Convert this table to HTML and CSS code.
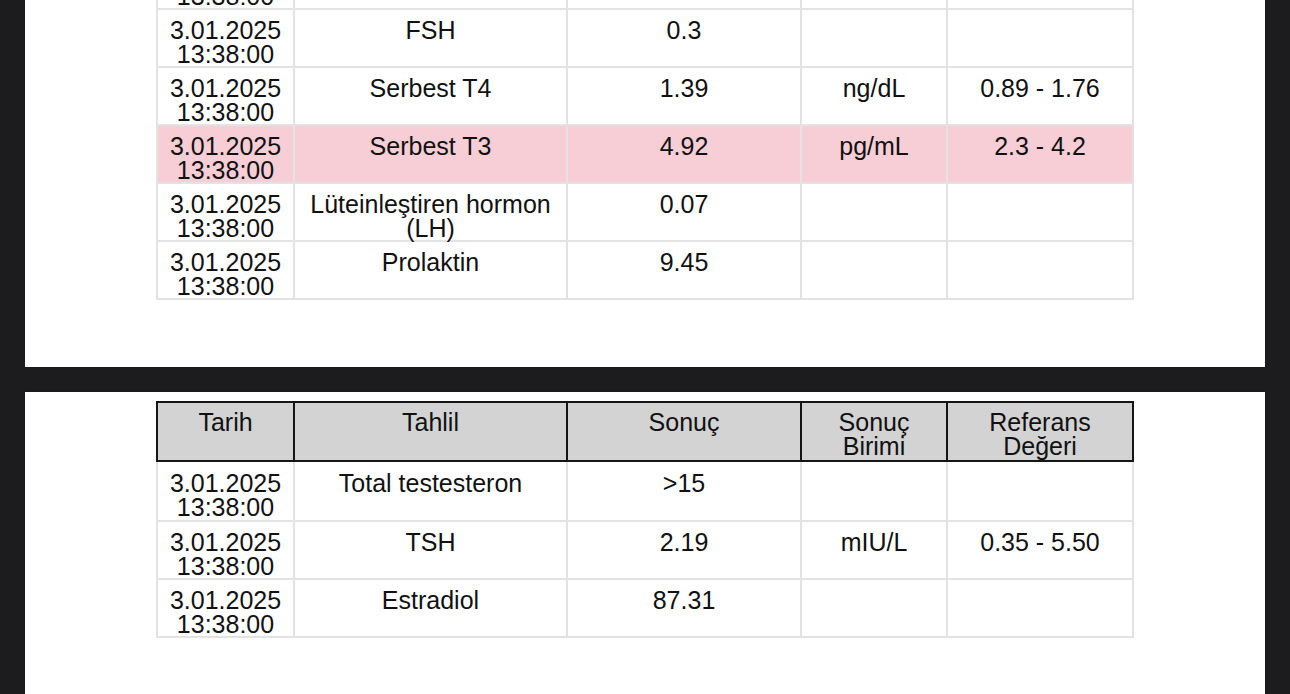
FILE: index.html
```html
<!DOCTYPE html>
<html lang="tr">
<head>
<meta charset="utf-8">
<title>Tahlil Sonuçları</title>
<link rel="stylesheet" href="styles.css">
</head>
<body>
<div class="viewer">
  <section class="page page-first">
    <table class="results">
      <colgroup>
        <col class="c-date"><col class="c-test"><col class="c-val"><col class="c-unit"><col class="c-ref">
      </colgroup>
      <tbody>
        <tr><td>3.01.2025<br>13:38:00</td><td></td><td></td><td></td><td></td></tr>
        <tr><td>3.01.2025<br>13:38:00</td><td>FSH</td><td>0.3</td><td></td><td></td></tr>
        <tr><td>3.01.2025<br>13:38:00</td><td>Serbest T4</td><td>1.39</td><td>ng/dL</td><td>0.89 - 1.76</td></tr>
        <tr class="flag"><td>3.01.2025<br>13:38:00</td><td>Serbest T3</td><td>4.92</td><td>pg/mL</td><td>2.3 - 4.2</td></tr>
        <tr><td>3.01.2025<br>13:38:00</td><td>Lüteinleştiren hormon (LH)</td><td>0.07</td><td></td><td></td></tr>
        <tr><td>3.01.2025<br>13:38:00</td><td>Prolaktin</td><td>9.45</td><td></td><td></td></tr>
      </tbody>
    </table>
  </section>
  <section class="page page-second">
    <table class="results">
      <colgroup>
        <col class="c-date"><col class="c-test"><col class="c-val"><col class="c-unit"><col class="c-ref">
      </colgroup>
      <thead>
        <tr><th>Tarih</th><th>Tahlil</th><th>Sonuç</th><th>Sonuç<br>Birimi</th><th>Referans<br>Değeri</th></tr>
      </thead>
      <tbody>
        <tr class="first"><td>3.01.2025<br>13:38:00</td><td>Total testesteron</td><td>&gt;15</td><td></td><td></td></tr>
        <tr><td>3.01.2025<br>13:38:00</td><td>TSH</td><td>2.19</td><td>mIU/L</td><td>0.35 - 5.50</td></tr>
        <tr><td>3.01.2025<br>13:38:00</td><td>Estradiol</td><td>87.31</td><td></td><td></td></tr>
      </tbody>
    </table>
  </section>
</div>
</body>
</html>
```

FILE: styles.css
```css
html, body {
  margin: 0;
  padding: 0;
  height: 100%;
  overflow: hidden;
  background: #1c1c1e;
}

.viewer {
  padding: 0 25px;
  display: flex;
  flex-direction: column;
  gap: 25px;
}

.page {
  background: #ffffff;
  box-shadow: 0 0 2px rgba(0, 0, 0, 0.12);
  display: flex;
  justify-content: center;
}

.page-first {
  margin-top: -60px;
  padding: 10px 0 67px;
}

.page-second {
  padding: 9px 0 120px;
}

.results {
  border-collapse: collapse;
  table-layout: fixed;
  width: 976px;
  font-family: "Liberation Sans", Arial, sans-serif;
  font-size: 25px;
  line-height: 23.5px;
  color: #111111;
}

.c-date { width: 137px; }
.c-test { width: 273px; }
.c-val  { width: 234px; }
.c-unit { width: 146px; }
.c-ref  { width: 186px; }

.results td,
.results th {
  border: 2px solid #e3e3e3;
  padding: 9px 4px 0;
  text-align: center;
  vertical-align: top;
  font-weight: normal;
}

.results th {
  background: #d3d3d3;
  border-color: #151515;
  padding: 8px 4px 2px;
}

.results tr.first td {
  padding-top: 10px;
  padding-bottom: 1px;
}

.results tr.flag td {
  background: #f7ced5;
}
```
